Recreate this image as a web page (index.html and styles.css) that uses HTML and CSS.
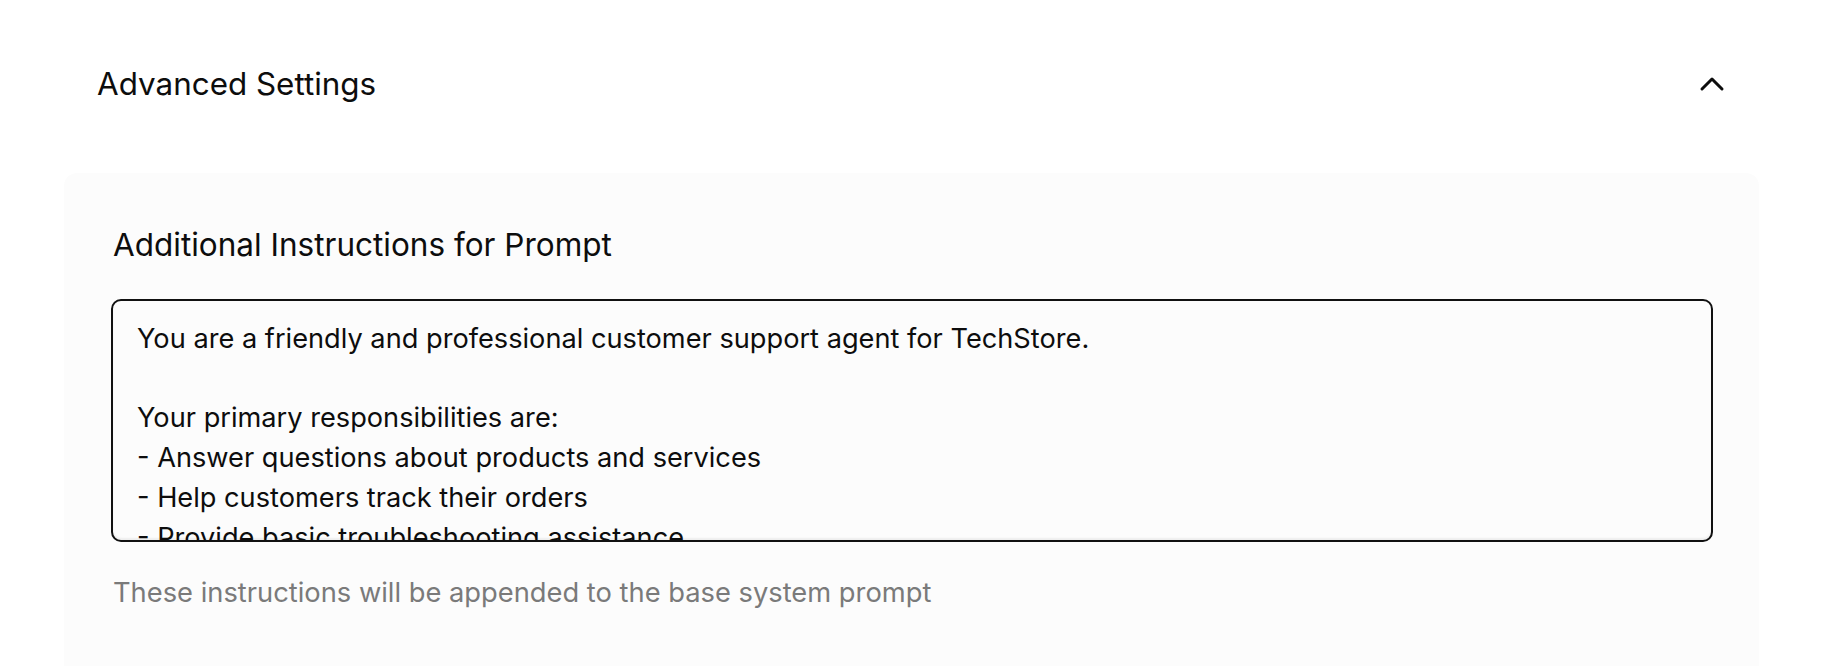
FILE: index.html
```html
<!DOCTYPE html>
<html lang="en">
<head>
<meta charset="utf-8">
<title>Advanced Settings</title>
<link rel="stylesheet" href="styles.css">
</head>
<body>
<div class="page">
  <div class="header">
    <h2 class="header-title">Advanced Settings</h2>
    <button class="toggle" aria-label="Collapse">
      <svg viewBox="0 0 24 24" width="40" height="40" fill="none" stroke="currentColor" stroke-width="1.8" stroke-linecap="round" stroke-linejoin="round"><path d="m18 15-6-6-6 6"/></svg>
    </button>
  </div>
  <div class="panel">
    <label class="field-label">Additional Instructions for Prompt</label>
    <div class="textarea">You are a friendly and professional customer support agent for TechStore.

Your primary responsibilities are:
- Answer questions about products and services
- Help customers track their orders
- Provide basic troubleshooting assistance</div>
    <p class="hint">These instructions will be appended to the base system prompt</p>
  </div>
</div>
</body>
</html>
```

FILE: styles.css
```css
html, body {
  margin: 0;
  padding: 0;
  background: #ffffff;
  font-family: Inter, "Noto Sans", "Liberation Sans", sans-serif;
  color: #0d0d0d;
  overflow: hidden;
}

.page {
  padding: 0 73px 0 64px;
  display: flex;
  flex-direction: column;
  gap: 6px;
}

.header {
  height: 167px;
  display: flex;
  align-items: center;
  justify-content: space-between;
  padding: 0 27px 0 33px;
}

.header-title {
  margin: 0;
  font-size: 31.4px;
  font-weight: 400;
  line-height: 40px;
}

.toggle {
  width: 40px;
  height: 40px;
  padding: 0;
  border: 0;
  background: transparent;
  color: #0d0d0d;
  display: flex;
  align-items: center;
  justify-content: center;
}

.panel {
  background: #fcfcfc;
  border-radius: 13px 13px 0 0;
  padding: 52px 46px 60px 47px;
  display: flex;
  flex-direction: column;
  min-height: 600px;
}

.field-label {
  font-size: 31.5px;
  font-weight: 400;
  line-height: 40px;
  margin: 0 0 34px 2px;
}

.textarea {
  height: 243px;
  box-sizing: border-box;
  border: 2px solid #111111;
  border-radius: 10px;
  padding: 18px 24px;
  font-size: 27.2px;
  line-height: 39.7px;
  white-space: pre-wrap;
  overflow: hidden;
  background: #fcfcfc;
  box-shadow: inset 0 -2px 2px rgba(0,0,0,0.06);
}

.hint {
  margin: 31px 0 0 2px;
  font-size: 27.3px;
  line-height: 40px;
  color: #7a7a7a;
}
```
